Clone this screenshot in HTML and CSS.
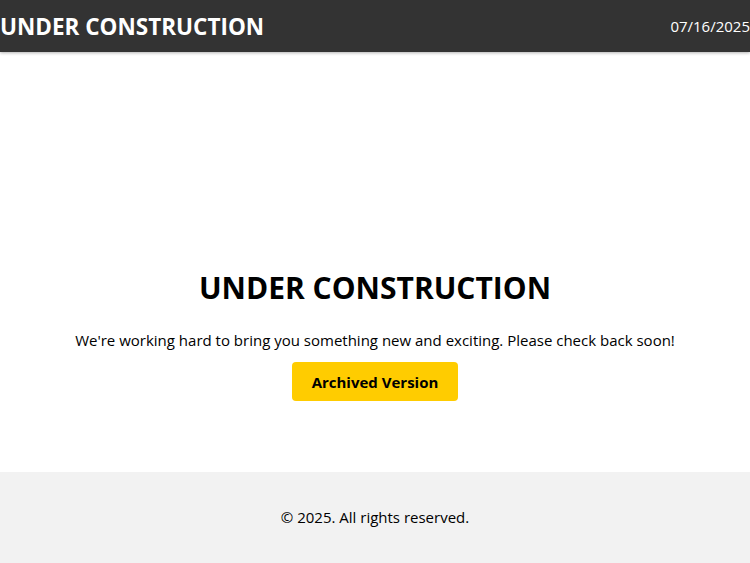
FILE: index.html
```html
<!DOCTYPE html>
<html lang="en">
<head>
    <meta charset="UTF-8">
    <meta name="viewport" content="width=device-width, initial-scale=1.0">
    <title>Under Construction</title>
    <link rel="stylesheet" href="styles.css">
</head>
<body>

    <div class="header">
        <h2>UNDER CONSTRUCTION</h2>
        <span class="date">07/16/2025</span>
    </div>

    <div class="container">
        <h1>UNDER CONSTRUCTION</h1>
        <p>We're working hard to bring you something new and exciting. Please check back soon!</p>
        <a class="archive-btn" href="/archive">Archived Version</a>
    </div>

    <div class="footer">
        <p>&copy; 2025. All rights reserved.</p>
    </div>

</body>
</html>
```
FILE: styles.css
```css
body {
    font-family: 'Open Sans', sans-serif;
    margin: 0;
    padding: 0;
    background: white;
    color: black;
    min-height: 100vh;
    display: flex;
    flex-direction: column;
}

.header {
    background: #333333;
    color: white;
    height: 52px;
    display: flex;
    justify-content: space-between;
    align-items: center;
    box-shadow: 0 1px 3px rgba(0, 0, 0, 0.3);
}

.header h2 {
    margin: 0;
    font-weight: 700;
    font-size: 22.5px;
}

.date {
    font-size: 15px;
}

.container {
    flex: 1;
    padding-top: 215px;
    text-align: center;
}

h1 {
    margin: 0 0 22px;
    font-size: 30px;
    font-weight: 700;
}

.container p {
    margin: 0 0 12px;
    font-size: 15px;
}

.archive-btn {
    display: inline-block;
    background: #ffcc00;
    color: black;
    font-weight: 700;
    font-size: 15px;
    padding: 9.5px 20px;
    border-radius: 4px;
    text-decoration: none;
}

.footer {
    background: #f2f2f2;
    text-align: center;
    padding: 35px 0 36px;
}

.footer p {
    margin: 0;
    font-size: 15px;
}
```
